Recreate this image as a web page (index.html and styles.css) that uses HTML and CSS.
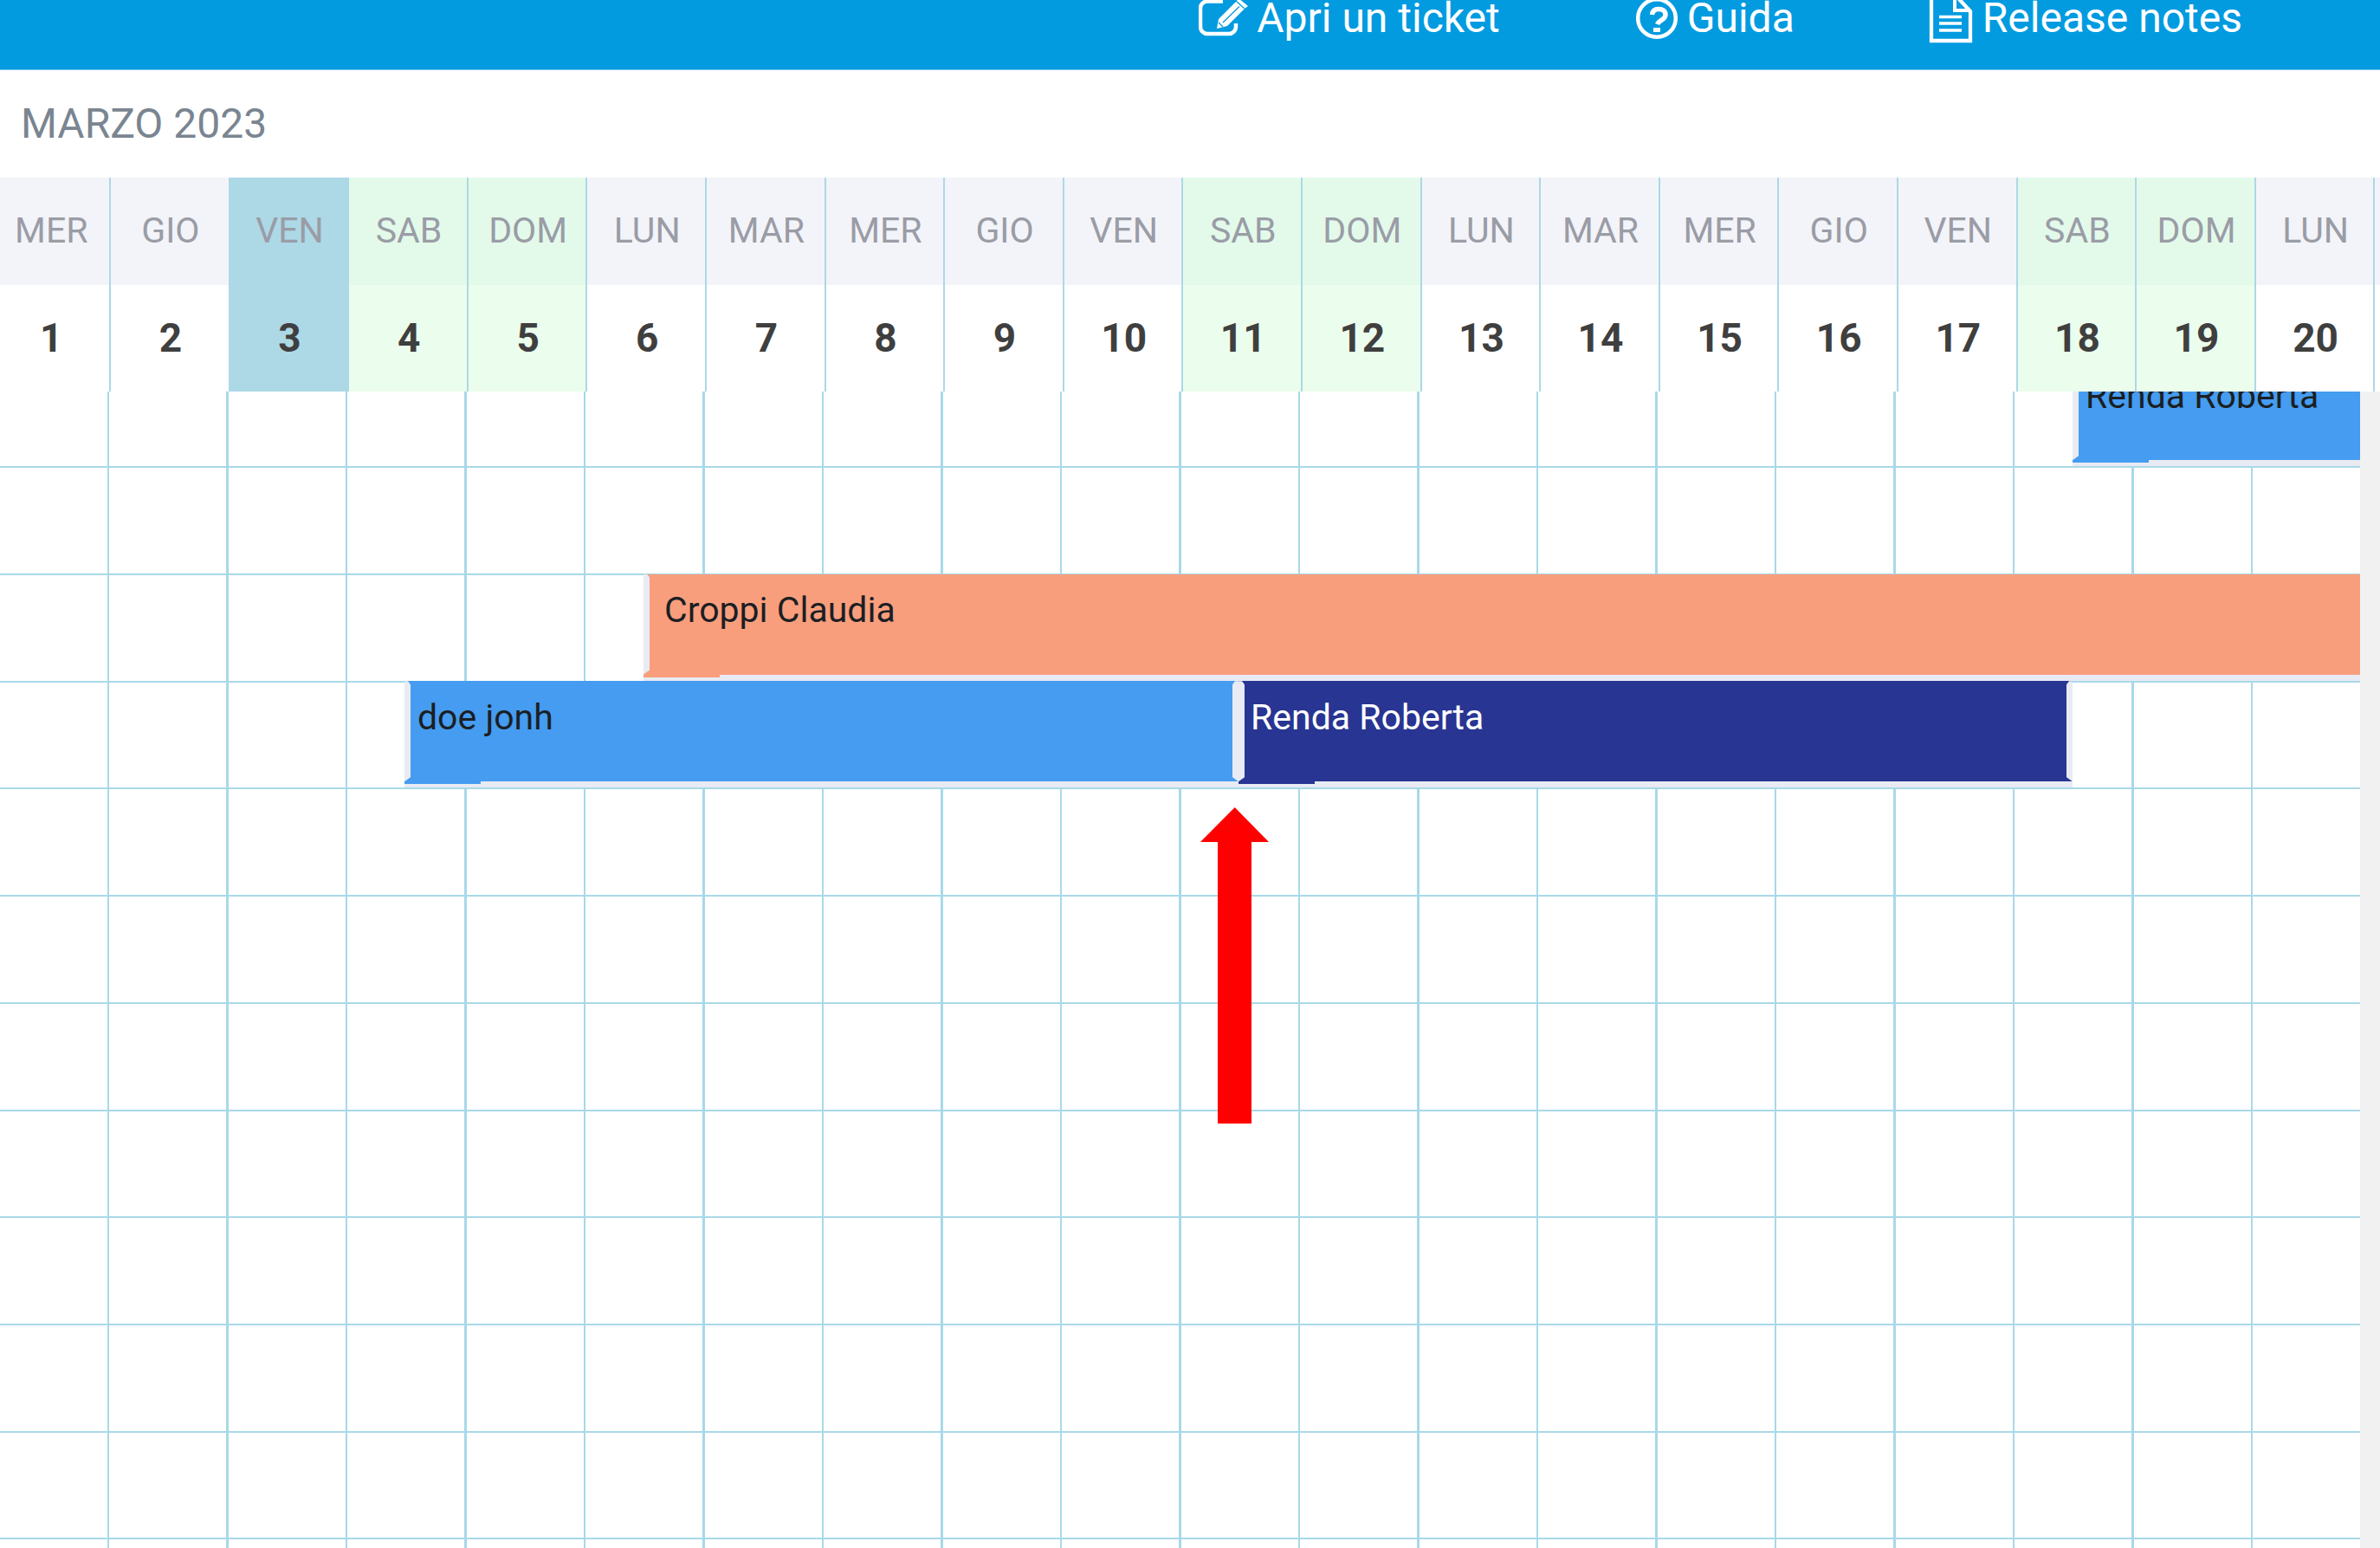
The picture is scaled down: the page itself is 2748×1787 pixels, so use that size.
FILE: index.html
```html
<!DOCTYPE html>
<html lang="it">
<head>
    <meta charset="UTF-8">
    <title>Calendario</title>
    <link rel="stylesheet" href="styles.css">
</head>
<body>
    <header class="topbar">
        <a class="toplink link-ticket">
            <svg class="icon icon-ticket" viewBox="10 0 58 45"><path d="M38 1.500H20a8 8 0 0 0-8 8V31a8 8 0 0 0 8 8h25a8 8 0 0 0 8-8v-4" fill="none" stroke="#fff" stroke-width="4.500"/><path d="M33 22L53 2l3-4 11 9-4 3-20 20-12 3z" fill="#fff"/><path d="M38 26L57 7.500M33 26l5 5M53 1l10 9" fill="none" stroke="#039be0" stroke-width="1.300"/></svg>
            Apri un ticket
        </a>
        <a class="toplink link-guida">
            <svg class="icon icon-guida" viewBox="9 0 48 46"><circle cx="33" cy="21" r="21.800" fill="none" stroke="#fff" stroke-width="4.500"/><path d="M27.500 17C28 12.500 31 10.500 35 10.500c5 0 8 2.500 8 6.500 0 6-7.500 6-9.500 11" fill="none" stroke="#fff" stroke-width="5.500"/><rect x="29" y="32" width="8" height="5" fill="#fff"/></svg>
            Guida
        </a>
        <a class="toplink link-notes">
            <svg class="icon icon-notes" viewBox="8 0 54 52"><path d="M12-5V47H57V13L44-1" fill="none" stroke="#fff" stroke-width="4.300"/><path d="M39-5V12H57" fill="none" stroke="#fff" stroke-width="4"/><path d="M21 19.500H47M21 27H47M21 35H47" stroke="#fff" stroke-width="3.500"/></svg>
            Release notes
        </a>
    </header>

    <h1 class="month">MARZO 2023</h1>

    <div class="days">
        <div class="day"><span class="day-name">MER</span><span class="day-num">1</span></div>
        <div class="day"><span class="day-name">GIO</span><span class="day-num">2</span></div>
        <div class="day today"><span class="day-name">VEN</span><span class="day-num">3</span></div>
        <div class="day weekend"><span class="day-name">SAB</span><span class="day-num">4</span></div>
        <div class="day weekend"><span class="day-name">DOM</span><span class="day-num">5</span></div>
        <div class="day"><span class="day-name">LUN</span><span class="day-num">6</span></div>
        <div class="day"><span class="day-name">MAR</span><span class="day-num">7</span></div>
        <div class="day"><span class="day-name">MER</span><span class="day-num">8</span></div>
        <div class="day"><span class="day-name">GIO</span><span class="day-num">9</span></div>
        <div class="day"><span class="day-name">VEN</span><span class="day-num">10</span></div>
        <div class="day weekend"><span class="day-name">SAB</span><span class="day-num">11</span></div>
        <div class="day weekend"><span class="day-name">DOM</span><span class="day-num">12</span></div>
        <div class="day"><span class="day-name">LUN</span><span class="day-num">13</span></div>
        <div class="day"><span class="day-name">MAR</span><span class="day-num">14</span></div>
        <div class="day"><span class="day-name">MER</span><span class="day-num">15</span></div>
        <div class="day"><span class="day-name">GIO</span><span class="day-num">16</span></div>
        <div class="day"><span class="day-name">VEN</span><span class="day-num">17</span></div>
        <div class="day weekend"><span class="day-name">SAB</span><span class="day-num">18</span></div>
        <div class="day weekend"><span class="day-name">DOM</span><span class="day-num">19</span></div>
        <div class="day"><span class="day-name">LUN</span><span class="day-num">20</span></div>
        <div class="day"><span class="day-name"></span><span class="day-num"></span></div>
    </div>

    <div class="board">
        <div class="rows">
            <div class="row">
                <div class="event event-blue ev-renda-top">Renda Roberta</div>
            </div>
            <div class="row"></div>
            <div class="row">
                <div class="event event-salmon ev-croppi">Croppi Claudia</div>
            </div>
            <div class="row">
                <div class="event event-blue ev-doe">doe jonh<span class="event-end"></span></div>
                <div class="event event-navy ev-renda">Renda Roberta<span class="event-end"></span></div>
            </div>
            <div class="row"></div>
            <div class="row"></div>
            <div class="row"></div>
            <div class="row"></div>
            <div class="row"></div>
            <div class="row"></div>
            <div class="row"></div>
            <div class="row"></div>
            <svg class="arrow" viewBox="0 0 79 365"><path d="M39.700 0L79 40H59V365H20V40H0z" fill="#ff0000"/></svg>
        </div>
        <div class="scrolltrack"></div>
    </div>
</body>
</html>
```

FILE: styles.css
```css
* {
    box-sizing: border-box;
}
html, body {
    height: 100%;
}
body {
    margin: 0;
    background: #fff;
    font-family: Roboto, "Liberation Sans", sans-serif;
    overflow: hidden;
}

/* top bar, scrolled a little off the page */
.topbar {
    display: flex;
    height: 81px;
    padding-right: 159px;
    justify-content: flex-end;
    background: #039be0;
    border-bottom: 1px solid #6cc6ee;
    overflow: hidden;
}
.toplink {
    display: flex;
    align-items: flex-start;
    height: 46px;
    margin-top: -2px;
    color: #fff;
    font-size: 48px;
    line-height: 46px;
    white-space: nowrap;
}
.link-ticket {
    margin-right: 157px;
}
.link-guida {
    margin-right: 154px;
}
.icon {
    flex: none;
    margin-top: 2px;
    margin-right: 9px;
}
.icon-ticket {
    width: 58px;
    height: 45px;
}
.icon-guida {
    width: 48px;
    height: 46px;
    margin-right: 11px;
}
.icon-notes {
    width: 54px;
    height: 52px;
}

.month {
    margin: 0;
    height: 124px;
    padding: 36px 0 0 24px;
    color: #7a8591;
    font-size: 48px;
    font-weight: 400;
    line-height: 52px;
}

/* day header */
.days {
    display: flex;
    overflow: hidden;
}
.day {
    flex: none;
    width: 137.6px;
    border-right: 2px solid #add8e6;
}
.day:first-child {
    margin-left: -9.5px;
}
.day:last-child {
    border-right: 0;
}
.day-name, .day-num {
    display: block;
    height: 123.5px;
    text-align: center;
    text-indent: 2px;
    line-height: 123.5px;
}
.day-name {
    background: #f3f4f9;
    color: #9a9ca6;
    font-size: 41px;
}
.day-num {
    color: #3f3f3f;
    font-size: 46px;
    font-weight: 700;
}
.weekend .day-name {
    background: #e3faea;
}
.weekend .day-num {
    background: #ebfdec;
}
.today .day-name, .today .day-num {
    background: #add8e6;
}

/* event grid */
.board {
    display: flex;
    height: 1335px;
}
.rows {
    position: relative;
    flex: 1;
    overflow: hidden;
}
.scrolltrack {
    flex: none;
    width: 23px;
    background: #f1f1f1;
}
.row {
    position: relative;
    height: 123.7px;
    border-bottom: 2px solid #a8d9e8;
    background: repeating-linear-gradient(90deg, #a8d9e8 -13.5px, #a8d9e8 -11.5px, transparent -11.5px, transparent 124px);
}
.row:first-child {
    height: 88.4px;
}

.event {
    position: absolute;
    top: -1.5px;
    height: 119px;
    padding: 17.5px 0 0 15px;
    font-size: 41px;
    line-height: 48px;
    color: #1b1f24;
    white-space: nowrap;
    box-shadow: 0 4px 0 #e8ebf3;
}
.event::before, .event-end {
    content: "";
    position: absolute;
    top: 0;
    width: 7px;
    height: 116px;
    background: #e8ebf3;
}
.event::before {
    left: 0;
    clip-path: polygon(0 0, 4px 0, 7px 4px, 7px 111px, 0 116px);
}
.event-end {
    right: 0;
    clip-path: polygon(3px 0, 100% 0, 100% 116px, 0 111px, 0 4px);
}
.event::after {
    content: "";
    position: absolute;
    left: 88px;
    right: 0;
    top: 116px;
    height: 3px;
    background: #e8ebf3;
}
.event-blue {
    background: #459cf0;
}
.event-salmon {
    background: #f99e7d;
}
.event-navy {
    background: #283593;
    color: #fff;
}
.ev-renda-top {
    top: -36.700px;
    left: 2393px;
    width: 340px;
}
.ev-croppi {
    left: 743px;
    width: 1990px;
    padding-left: 24px;
}
.ev-doe {
    left: 467px;
    width: 963px;
}
.ev-renda {
    left: 1430px;
    width: 963px;
    padding-left: 14px;
}
.arrow {
    position: absolute;
    left: 1386px;
    top: 480px;
    width: 79px;
    height: 365px;
}
```
